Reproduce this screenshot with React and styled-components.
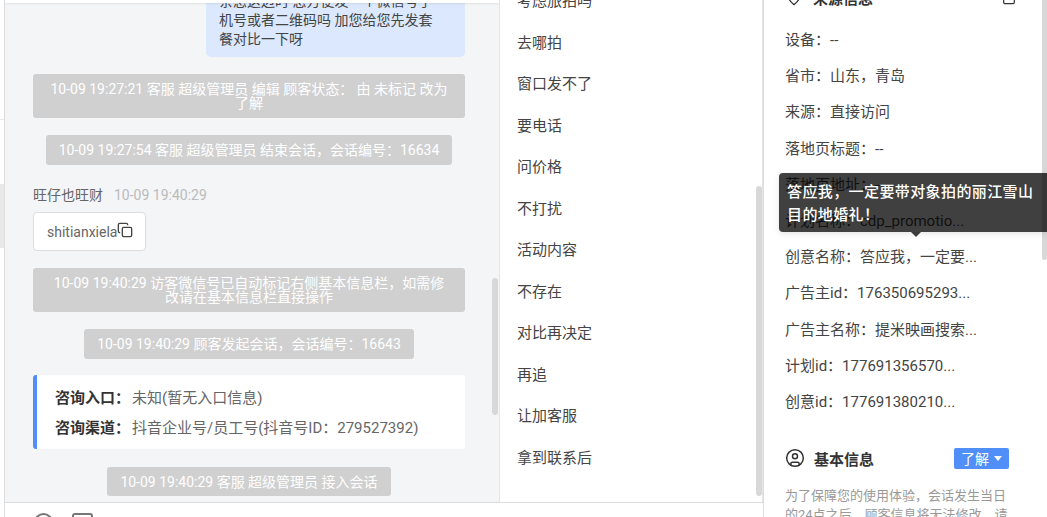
import React from "react";
import styled, { createGlobalStyle } from "styled-components";
import { MapPin, Clipboard, CircleUser, Copy } from "lucide-react";

const GlobalStyle = createGlobalStyle`
    * {
        box-sizing: border-box;
    }

    html, body {
        margin: 0;
        height: 517px;
        overflow: hidden;
        background: #fff;
        font-family: Roboto, "Noto Sans CJK SC", sans-serif;
        color: #333;
    }
`;

const quickReplies = [
    "考虑旅拍吗", "去哪拍", "窗口发不了", "要电话", "问价格", "不打扰",
    "活动内容", "不存在", "对比再决定", "再追", "让加客服", "拿到联系后",
];

const sourceRows = [
    ["设备：", "--"],
    ["省市：", "山东，青岛"],
    ["来源：", "直接访问"],
    ["落地页标题：", "--"],
    ["落地页地址：", "--"],
    ["计划名称：", "cdp_promotio..."],
    ["创意名称：", "答应我，一定要..."],
    ["广告主id：", "176350695293..."],
    ["广告主名称：", "提米映画搜索..."],
    ["计划id：", "177691356570..."],
    ["创意id：", "177691380210..."],
];

function App() {
    return (
        <Page>
            <GlobalStyle />
            <LeftStrip>
                <StripLine />
                <StripPatch />
            </LeftStrip>

            <Main>
                <Columns>
                    <ChatColumn>
                        <TopBar />
                        <ChatScroll>
                            <Bubble>
                                亲您这边时 您方便发一个微信号手机号或者二维码吗 加您给您先发套餐对比一下呀
                            </Bubble>
                            <SystemNote>10-09 19:27:21 客服 超级管理员 编辑 顾客状态： 由 未标记 改为 了解</SystemNote>
                            <SystemNote>10-09 19:27:54 客服 超级管理员 结束会话，会话编号：16634</SystemNote>
                            <VisitorMessage>
                                <MessageMeta>
                                    <VisitorName>旺仔也旺财</VisitorName>
                                    <MessageTime>10-09 19:40:29</MessageTime>
                                </MessageMeta>
                                <WechatCard>
                                    shitianxiela
                                    <Copy size={16} strokeWidth={2} />
                                </WechatCard>
                            </VisitorMessage>
                            <SystemNote $full>10-09 19:40:29 访客微信号已自动标记右侧基本信息栏，如需修<br />改请在基本信息栏直接操作</SystemNote>
                            <SystemNote>10-09 19:40:29 顾客发起会话，会话编号：16643</SystemNote>
                            <EntryCard>
                                <EntryRow><b>咨询入口：</b>未知(暂无入口信息)</EntryRow>
                                <EntryRow><b>咨询渠道：</b>抖音企业号/员工号(抖音号ID：279527392)</EntryRow>
                            </EntryCard>
                            <SystemNote $tight>10-09 19:40:29 客服 超级管理员 接入会话</SystemNote>
                        </ChatScroll>
                        <ChatThumb />
                    </ChatColumn>

                    <QuickColumn>
                        {quickReplies.map((text) => (
                            <QuickItem key={text}>{text}</QuickItem>
                        ))}
                        <QuickThumb />
                    </QuickColumn>
                </Columns>

                <Footer>
                    <EmojiIcon />
                    <ImageIcon />
                </Footer>
            </Main>

            <InfoPanel>
                <InfoContent>
                    <SectionHead>
                        <MapPin size={18} strokeWidth={1.8} />
                        <SectionTitle>来源信息</SectionTitle>
                        <HeadAction>
                            <Clipboard size={16} strokeWidth={1.8} />
                        </HeadAction>
                    </SectionHead>
                    <SourceList>
                        {sourceRows.map(([label, value]) => (
                            <SourceRow key={label}>{label}{value}</SourceRow>
                        ))}
                    </SourceList>
                    <BasicHead>
                        <CircleUser size={20} strokeWidth={1.8} />
                        <SectionTitle>基本信息</SectionTitle>
                        <StatusButton>了解<Caret /></StatusButton>
                    </BasicHead>
                    <Notice>为了保障您的使用体验，会话发生当日的24点之后，顾客信息将无法修改，请</Notice>
                </InfoContent>
                <InfoThumb />
                <Tooltip>答应我，一定要带对象拍的丽江雪山目的地婚礼！</Tooltip>
            </InfoPanel>
        </Page>
    );
}

export default App;

const Page = styled.div`
    display: flex;
    width: 1047px;
    height: 517px;
    overflow: hidden;
`;

const LeftStrip = styled.div`
    flex: 0 0 5px;
    border-right: 1px solid #ddd;
    background: #fff;
`;

const StripLine = styled.div`
    height: 1px;
    margin-top: 119px;
    background: #e8e8e8;
`;

const StripPatch = styled.div`
    height: 64px;
    margin-top: 64px;
    background: #e8e8e8;
`;

const Main = styled.div`
    flex: 0 0 758px;
    display: flex;
    flex-direction: column;
    min-width: 0;
`;

const Columns = styled.div`
    flex: 1;
    display: flex;
    min-height: 0;
`;

const ChatColumn = styled.div`
    position: relative;
    flex: 0 0 494px;
    display: flex;
    flex-direction: column;
    background: #f4f5f7;
`;

const TopBar = styled.div`
    position: relative;
    z-index: 1;
    flex: 0 0 3px;
    background: #fff;
    box-shadow: 0 1px 2px rgba(0, 0, 0, 0.08);
`;

const ChatScroll = styled.div`
    flex: 1;
    min-height: 0;
    overflow: hidden;
    display: flex;
    flex-direction: column;
    justify-content: flex-end;
    align-items: center;
    gap: 17px;
    padding: 0 34px 6px 28px;
`;

const Bubble = styled.div`
    flex: none;
    align-self: flex-end;
    width: 259px;
    padding: 8px 20px 8px 13px;
    border-radius: 0 0 5px 5px;
    background: #dbe8fd;
    font-size: 14px;
    line-height: 19px;
    color: #444;
`;

const SystemNote = styled.div`
    flex: none;
    align-self: ${(props) => (props.$full ? "stretch" : "center")};
    max-width: 432px;
    margin-top: ${(props) => (props.$tight ? "1px" : "0")};
    padding: ${(props) => (props.$tight ? "8px 13px 7px" : "8px 13px")};
    border-radius: 3px;
    background: #d0d0d0;
    font-size: 14px;
    line-height: 14px;
    text-align: center;
    color: #fff;
`;

const VisitorMessage = styled.div`
    flex: none;
    align-self: flex-start;
    display: flex;
    flex-direction: column;
    align-items: flex-start;
    gap: 7px;
    margin-top: 3px;
`;

const MessageMeta = styled.div`
    display: flex;
    gap: 11px;
    font-size: 14px;
    line-height: 20px;
`;

const VisitorName = styled.span`
    color: #666;
`;

const MessageTime = styled.span`
    color: #bbb;
`;

const WechatCard = styled.div`
    display: flex;
    align-items: center;
    height: 39px;
    padding: 0 12px 0 13px;
    border: 1px solid #ddd;
    border-radius: 4px;
    background: #fff;
    font-size: 14px;
    color: #666;

    svg {
        margin-top: -3px;
        color: #444;
    }
`;

const EntryCard = styled.div`
    flex: none;
    align-self: stretch;
    margin-top: -1px;
    padding: 8px 18px 6px;
    border-left: 4px solid #4f8ff7;
    border-radius: 3px;
    background: #fff;
`;

const EntryRow = styled.div`
    font-size: 15px;
    line-height: 30px;
    color: #666;

    b {
        margin-right: 2px;
        font-weight: 600;
        color: #333;
    }
`;

const Thumb = styled.div`
    position: absolute;
    width: 6px;
    border-radius: 3px;
    background: #d8d8d8;
`;

const ChatThumb = styled(Thumb)`
    top: 278px;
    right: 1px;
    height: 137px;
`;

const QuickColumn = styled.div`
    position: relative;
    flex: 1;
    padding: 0 0 0 17px;
    margin-top: -19px;
    border-left: 1px solid #e5e5e5;
    border-right: 1px solid #e5e5e5;
    background: #fff;
`;

const QuickItem = styled.div`
    height: 41.5px;
    font-size: 15px;
    line-height: 41.5px;
    color: #444;
`;

const QuickThumb = styled(Thumb)`
    top: 205px;
    right: 0;
    height: 310px;
`;

const Footer = styled.div`
    flex: 0 0 15px;
    display: flex;
    gap: 19px;
    padding: 10px 0 0 29px;
    overflow: hidden;
    border-top: 1px solid #ddd;
    background: #fff;
`;

const EmojiIcon = styled.div`
    flex: none;
    width: 19px;
    height: 19px;
    border: 2px solid #777;
    border-radius: 50%;
`;

const ImageIcon = styled.div`
    flex: none;
    width: 21px;
    height: 19px;
    border: 2px solid #777;
    border-radius: 3px;
`;

const InfoPanel = styled.div`
    position: relative;
    flex: 1;
    min-width: 0;
    overflow: hidden;
    border-left: 1px solid #ddd;
    background: #fff;
`;

const InfoContent = styled.div`
    margin-top: -15px;
    padding: 0 38px 0 21px;
`;

const SectionHead = styled.div`
    display: flex;
    align-items: center;
    gap: 10px;
    height: 24px;
    margin-bottom: 13px;
    color: #333;
`;

const SectionTitle = styled.span`
    font-size: 15px;
    font-weight: 600;
`;

const HeadAction = styled.span`
    display: flex;
    margin-left: auto;
    margin-right: -8px;
`;

const SourceList = styled.div`
    display: flex;
    flex-direction: column;
`;

const SourceRow = styled.div`
    height: 36.2px;
    font-size: 15px;
    line-height: 36.2px;
    white-space: nowrap;
    color: #444;
`;

const BasicHead = styled(SectionHead)`
    height: 24px;
    margin: 26px 0 0;
    gap: 9px;
`;

const StatusButton = styled.span`
    display: flex;
    align-items: center;
    gap: 5px;
    height: 21px;
    margin-left: auto;
    padding: 0 7px;
    border-radius: 2px;
    background: #4f8ff7;
    font-size: 14px;
    color: #fff;
`;

const Caret = styled.i`
    width: 0;
    height: 0;
    border-style: solid;
    border-width: 5px 4px 0;
    border-color: #fff transparent transparent;
`;

const Notice = styled.p`
    width: 226px;
    margin: 16px 0 0;
    font-size: 13px;
    line-height: 19px;
    color: #999;
`;

const InfoThumb = styled(Thumb)`
    top: 0;
    right: 0;
    width: 5px;
    height: 260px;
    border-radius: 0 0 3px 3px;
`;

const Tooltip = styled.div`
    position: absolute;
    top: 173px;
    left: 15px;
    right: -4px;
    padding: 8px 8px 5px;
    border-radius: 4px;
    background: rgba(0, 0, 0, 0.75);
    box-shadow: 0 2px 6px rgba(0, 0, 0, 0.1);
    font-size: 15px;
    font-weight: 500;
    line-height: 23px;
    letter-spacing: 0.4px;
    color: #fff;

    &::after {
        content: "";
        position: absolute;
        left: 132px;
        bottom: -5px;
        border-style: solid;
        border-width: 5px 5px 0;
        border-color: rgba(0, 0, 0, 0.75) transparent transparent;
    }
`;
